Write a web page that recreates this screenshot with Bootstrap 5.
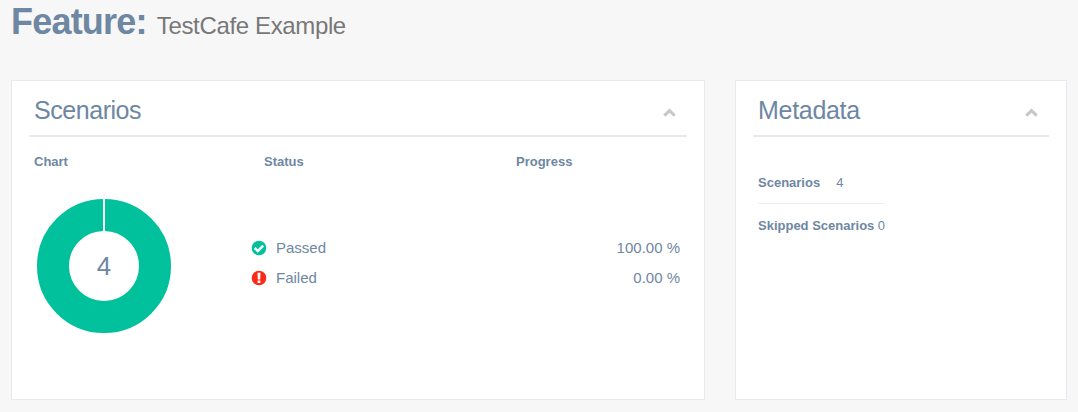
<!DOCTYPE html>
<html lang="en">
<head>
<meta charset="utf-8">
<title>Feature: TestCafe Example</title>
<link rel="stylesheet" href="https://cdn.jsdelivr.net/npm/bootstrap@5.3.0/dist/css/bootstrap.min.css">
<style>
body{background:#f7f7f7;color:#6e87a2;font-family:"Liberation Sans",Arial,sans-serif;font-size:13px;line-height:20px;overflow:hidden}
.page{padding:0 11px}
.page-title{height:80px;font-size:36px;line-height:44px;letter-spacing:-.8px}
.page-title small{font-size:24px;font-weight:400;color:#777;letter-spacing:-.36px;margin-left:1px}
.panels{gap:30px}
.panel{background:#fff;border:1px solid #e6e9ed;height:320px;padding:0 17px}
.panel-main{width:694px}
.panel-meta{width:332px}
.panel-head{height:56px;border-bottom:2px solid #e6e9ed;padding:0 11px 0 5px}
.panel-head h2{font-size:25px;line-height:30px;margin-top:3px;letter-spacing:-.45px}
.panel-meta h2{letter-spacing:-.3px}
.panel-head svg{margin-top:8px}
.heads{padding:15px 5px 0}
.heads>div{font-weight:700;letter-spacing:0}
.col-chart{width:230px}
.col-status{width:252px}
.stats{padding:26px 5px 0 7px}
.legend{margin-left:79px;padding-top:35px}
.legend>div{height:30px;font-size:15px;padding-right:2px}
.legend svg{margin-right:9px}
.meta-table{margin:36px 0 0 5px;width:127px}
.meta-row{height:31px;border-bottom:1px solid #eee}
</style>
<script src="https://cdn.jsdelivr.net/npm/bootstrap@5.3.0/dist/js/bootstrap.bundle.min.js"></script>
</head>
<body>
<main class="page">
  <h1 class="page-title fw-bold mb-0">Feature: <small>TestCafe Example</small></h1>
  <div class="panels d-flex">
    <section class="panel panel-main">
      <header class="panel-head d-flex align-items-center justify-content-between">
        <h2 class="fw-normal mb-0">Scenarios</h2>
        <svg width="13" height="9" viewBox="0 0 13 9"><path d="M1.3 7.6 6.5 2.6l5.2 5" fill="none" stroke="#c5c7cb" stroke-width="3"/></svg>
      </header>
      <div class="heads d-flex">
        <div class="col-chart">Chart</div>
        <div class="col-status">Status</div>
        <div>Progress</div>
      </div>
      <div class="stats d-flex">
        <svg class="flex-shrink-0" width="136" height="136" viewBox="0 0 136 136">
          <circle cx="68" cy="68" r="51" fill="none" stroke="#00c19c" stroke-width="32"/>
          <path d="M68 0v34" stroke="#fff" stroke-width="2"/>
          <text x="68" y="77" text-anchor="middle" font-size="26" fill="#6e87a2">4</text>
        </svg>
        <div class="legend flex-grow-1">
          <div class="d-flex align-items-center">
            <svg width="16" height="16" viewBox="0 0 16 16"><circle cx="8" cy="8" r="7.3" fill="#00c19c"/><path d="m3.7 8 3.1 3.1 5.4-5.4" fill="none" stroke="#fff" stroke-width="2.5"/></svg>
            <span>Passed</span><span class="ms-auto">100.00 %</span>
          </div>
          <div class="d-flex align-items-center">
            <svg width="16" height="16" viewBox="0 0 16 16"><circle cx="8" cy="8" r="7.3" fill="#fb2c17"/><path d="M6.5 2.8h3l-.3 6.6H6.8zM6.6 10.4h2.8v2.5H6.6z" fill="#fff"/></svg>
            <span>Failed</span><span class="ms-auto">0.00 %</span>
          </div>
        </div>
      </div>
    </section>
    <section class="panel panel-meta">
      <header class="panel-head d-flex align-items-center justify-content-between">
        <h2 class="fw-normal mb-0">Metadata</h2>
        <svg width="13" height="9" viewBox="0 0 13 9"><path d="M1.3 7.6 6.5 2.6l5.2 5" fill="none" stroke="#c5c7cb" stroke-width="3"/></svg>
      </header>
      <div class="meta-table">
        <div class="meta-row d-flex"><strong class="me-3">Scenarios</strong><span>4</span></div>
        <div class="d-flex justify-content-between pt-2 mt-1 text-nowrap"><strong>Skipped Scenarios</strong><span>0</span></div>
      </div>
    </section>
  </div>
</main>
</body>
</html>
